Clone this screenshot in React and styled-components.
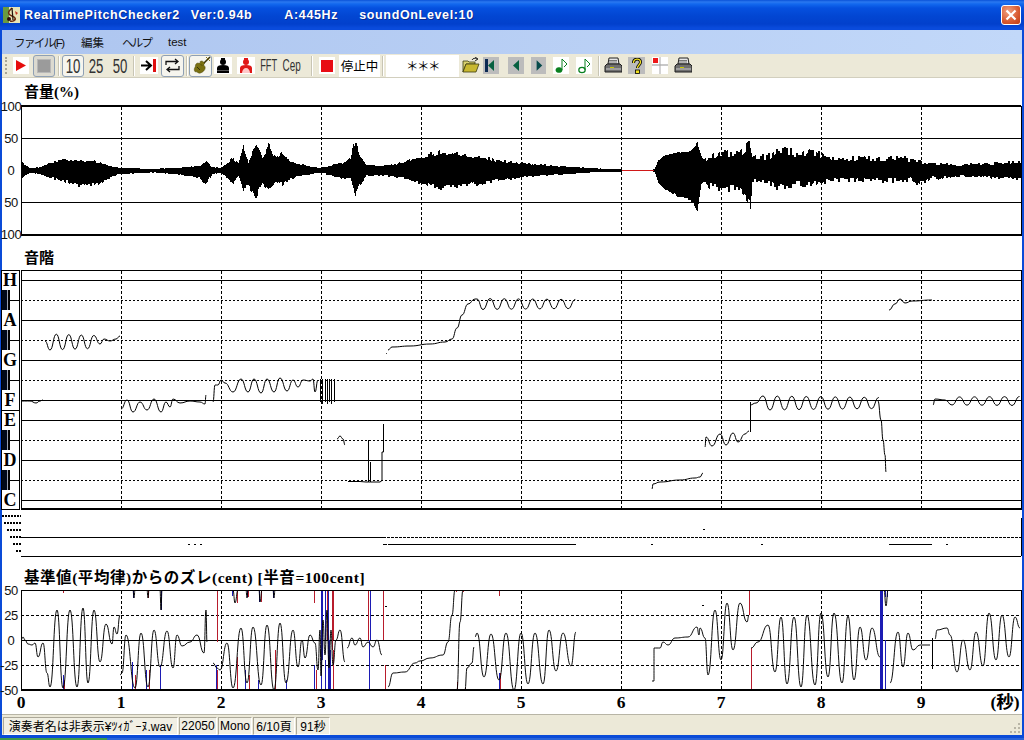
import React from "react";
import styled, { createGlobalStyle } from "styled-components";

const Global = createGlobalStyle`
  html, body { margin: 0; padding: 0; background: #fff; }
  #root { width: 1024px; height: 740px; overflow: hidden; }
`;

const CJK = `"Liberation Sans", "Noto Sans CJK JP", sans-serif`;
const SERIF = `"Liberation Serif", "Noto Sans CJK JP", serif`;

/* ---------- window chrome ---------- */
const Win = styled.div`
  width: 1024px; height: 740px; display: flex; flex-direction: column; overflow: hidden;
  font-family: ${CJK}; color: #000;
`;
const TitleBar = styled.header`
  height: 30px; flex: none; display: flex; align-items: center; padding: 0 3px 0 3px; box-sizing: border-box;
  background: linear-gradient(180deg, #0a52d8 0, #2a78f0 2px, #1268ee 4px, #0550df 8px, #0246d2 16px, #0240cc 24px, #0a4bdc 28px, #0a4bdc 30px);
`;
const TitleText = styled.div`
  display: flex; margin-left: 4px; color: #fff; font-weight: bold; font-size: 12.5px; letter-spacing: 0.65px;
  text-shadow: 1px 1px 0 #0a2a90; white-space: nowrap;
`;
const TitlePart = styled.span` margin-left: ${p => p.$ml || 0}px; `;
const CloseBtn = styled.div`
  margin-left: auto; margin-right: 0; width: 20px; height: 20px; box-sizing: border-box; border: 1px solid #fff; border-radius: 3px;
  background: radial-gradient(circle at 35% 30%, #f0a080, #d85a30 60%, #c03c14);
  display: flex; align-items: center; justify-content: center;
`;
const Client = styled.div`
  flex: 1; min-height: 0; display: flex; flex-direction: column; border-left: 2px solid #0a4bd8; border-right: 2px solid #0a4bd8; background: #fff;
`;
const MenuBar = styled.nav`
  height: 24px; flex: none; display: flex; align-items: center; padding-left: 12px; font-size: 11.5px;
  background: linear-gradient(90deg, #adc5ef, #c2d8f9);
`;
const MenuItem = styled.span`
  color: #111; width: ${p => p.$w}px; flex: none; letter-spacing: ${p => p.$ls || 0}px; white-space: nowrap;
`;
const ToolBar = styled.div`
  height: 24px; flex: none; box-sizing: border-box; display: flex; align-items: center; background: #ece9d8; border-bottom: 1px solid #d2cfbe;
`;
const Grip = styled.div`
  margin-left: ${p => p.$ml}px; width: 2px; height: 17px; border-left: 2px dotted #a8a594; box-sizing: border-box;
`;
const Sep = styled.div`
  margin-left: ${p => p.$ml}px; width: 2px; height: 20px; box-sizing: border-box; border-left: 1px solid #c8c5b4; border-right: 1px solid #fff;
`;
const Tool = styled.div`
  flex: none; margin-left: ${p => p.$ml}px; width: ${p => p.$w}px; height: ${p => p.$framed ? 22 : 17}px; box-sizing: border-box;
  display: flex; align-items: center; justify-content: center;
  background: ${p => p.$bg || "transparent"};
  border: ${p => p.$framed ? "1px solid #8fa0b4" : "none"};
  border-radius: ${p => p.$framed ? 3 : 0}px;
`;
const NarrowDigits = styled.span`
  flex: none; display: inline-block; font-size: ${p => p.$size || 20}px; line-height: 1; transform: scaleX(${p => p.$sx || 0.66}); font-family: "Liberation Sans", sans-serif; color: #333; white-space: nowrap;
`;
const Field = styled.div`
  flex: none; margin-left: ${p => p.$ml}px; width: ${p => p.$w}px; height: 22px; background: #fff; display: flex; align-items: center; justify-content: center;
  font-size: 12.5px; letter-spacing: ${p => p.$ls || 0}px; white-space: nowrap;
`;

/* ---------- body ---------- */
const Body = styled.main` flex: 1; min-height: 0; display: flex; flex-direction: column; background: #fff; `;
const Heading = styled.h2`
  margin: 0; padding: ${p => p.$pt}px 0 0 22px; height: ${p => p.$h}px; box-sizing: border-box; line-height: 22px;
  font-family: ${SERIF}; font-weight: bold; font-size: ${p => p.$size || 15}px; letter-spacing: ${p => p.$ls || 0}px; white-space: nowrap;
`;
const Plot = styled.svg` display: block; flex: none; overflow: visible; `;

const StatusBar = styled.footer`
  height: 21px; flex: none; box-sizing: border-box; display: flex; align-items: center; gap: 1px; padding: 1px 0 0 1px; background: #ece9d8; border-top: 1px solid #b8b5a6; font-size: 12px;
  position: relative;
`;
const Pane = styled.div`
  width: ${p => p.$w}px; height: 18px; box-sizing: border-box; display: flex; align-items: center; justify-content: center; background: #f1efe4; white-space: nowrap;
  border-right: 1px solid #fff; border-bottom: 1px solid #fff; border-left: 1px solid #aca899; border-top: 1px solid #aca899; overflow: hidden;
`;
const Resize = styled.svg` position: absolute; right: 1px; bottom: 1px; `;
const FrameBottom = styled.div` height: 3px; flex: none; background: #0a4bd8; `;
const TaskBar = styled.div` height: 2px; flex: none; display: flex; background: #2a64d8; `;
const StartEdge = styled.div` width: 107px; background: #3f9a4a; `;

/* ---------- data helpers ---------- */
function rng(seed) {
  let s = seed;
  return () => {
    s = (s + 0x6d2b79f5) | 0;
    let t = Math.imul(s ^ (s >>> 15), 1 | s);
    t = (t + Math.imul(t ^ (t >>> 7), 61 | t)) ^ t;
    return ((t ^ (t >>> 14)) >>> 0) / 4294967296;
  };
}
const ENV = [
  [21,10,9],[24,5,5],[30,2,2],[40,3,4],[50,7,7],[60,10,10],[70,10,12],[78,9,16],[85,9,13],[92,10,14],[100,7,12],[110,4,7],[120,2,3],[130,2,3],[150,1,2],[170,2,3],[190,3,6],[200,5,8],[205,9,13],[212,3,4],[220,2,2],[230,10,10],[233,12,12],[238,6,6],[243,22,18],[248,8,16],[256,29,25],[262,13,13],[268,24,19],[275,12,12],[282,18,14],[290,8,8],[300,6,5],[310,3,4],[320,2,2],[340,7,7],[345,8,8],[350,12,8],[355,31,25],[360,14,13],[366,5,5],[380,4,5],[400,7,7],[420,13,12],[440,18,17],[460,16,15],[480,13,13],[500,9,9],[530,6,6],[560,4,4],[590,2,2],[610,1,1],[621,1,1],[622,0,0],[652,0,0],[654,1,1],[658,10,12],[665,15,19],[680,18,27],[690,19,29],[697,27,40],[701,14,14],[703,11,11],[710,13,15],[720,16,17],[740,18,18],[745,22,24],[750,24,32],[752,12,10],[770,14,12],[780,22,18],[800,14,13],[810,18,15],[825,13,11],[840,11,10],[860,12,9],[880,11,10],[900,12,10],[910,10,9],[920,8,14],[930,6,8],[960,5,5],[1020,8,8],
];
function envAt(x) {
  for (let i = 0; i < ENV.length - 1; i++) {
    const a = ENV[i], b = ENV[i + 1];
    if (x >= a[0] && x <= b[0]) {
      const t = (x - a[0]) / (b[0] - a[0]);
      return [a[1] + (b[1] - a[1]) * t, a[2] + (b[2] - a[2]) * t];
    }
  }
  return [1, 1];
}
function wavePath() {
  const r = rng(11);
  let d = "";
  let nu = 1, nl = 1;
  for (let x = 22; x < 1021; x++) {
    const [u, l] = envAt(x);
    if (u === 0 && l === 0) continue;
    const noisy = (x > 703 && x < 1021) ? 0.5 : (x > 654 && x < 703) ? 0.08 : 0.3;
    if (x % 2 === 0) {
      nu = 1 - noisy * 0.5 + noisy * r();
      nl = 1 - noisy * 0.5 + noisy * r();
    }
    d += `M${x}.5 ${(170 - Math.max(u * nu, 1)).toFixed(1)}V${(170.5 + Math.max(l * nl, 1)).toFixed(1)}`;
  }
  return d;
}
function smooth(p) {
  let d = `M${p[0][0]} ${p[0][1]}`;
  for (let i = 1; i < p.length; i++) {
    const [x0, y0] = p[i - 1], [x1, y1] = p[i];
    const m = (x0 + x1) / 2;
    d += `C${m} ${y0} ${m} ${y1} ${x1} ${y1}`;
  }
  return d;
}
function vib(x0, x1, yc, amp, period, ampEnd = amp, dir = 1) {
  const out = [];
  let s = dir;
  for (let x = x0; x <= x1; x += period / 2) {
    const t = (x - x0) / Math.max(1, x1 - x0);
    out.push([+x.toFixed(1), yc + s * (amp + (ampEnd - amp) * t)]);
    s = -s;
  }
  return out;
}
const PITCH = [
  [[22,401],[30,401],[36,403],[40,401],[43,400]],
  [[45,341],...vib(50,94,342,8,12.5,6.5),[100,344],[104,339],[110,341],[116,339],[120,336]],
  [[121,409],[127,400],[133,412],[140,402],[147,410],[154,399],[161,412],[166,402],[170,407],[173,399],[180,403],[190,401],[200,402],[205,404],[206,395]],
  [[213,402],[215,385],[218,385],[221,380],[225,383],[233,392],[241,379],[248,392],[254,379],[261,393],[267,379],[274,392],[280,378],[287,391],[293,380],[298,387],[303,380],[310,381],[313,379],[315,392],[318,380]],
  [[337,439],[340,436],[343,439],[345,445]],
  [[386,354],[387,353]],
  [[388,350],[392,347],[410,346],[430,344],[445,342],[452,339],[457,328],[462,315],[468,304],[475,299],[477,299],...vib(483,576,304,5.5,14.2,4.5)],
  [[652,489],[653,484],[660,482],[680,480],[695,478],[700,477],[703,473]],
  [[705,447],[706,437],[712,446],[720,434],[726,445],[733,433],[738,442],[745,434],[749,431]],
  [[750,405],[756,403],[763,396],...vib(770,880,403,7,14.5,5.5)],
  [[878,401],[881,420],[883,440],[885,455],[886,472]],
  [[889,310],[895,304],[900,299],[905,303],[912,301],[932,300]],
  [[933,405],[935,399],[945,400],...vib(952,1020,401,4,15,4.5)],
];
const COMB = [320,322,325,327,329,331,334];
const DEV = [
  [[21,640],[23,637],[25,640],[28,644],[32,645],[35,643],[38,657],[43,643],[47,673],[50,687],[57,610],[63,688],[70,610],[77,687],[83,608],[88,683],[94,610],[100,662],[106,624],[112,644],[114,627],[117,634],[120,615]],
  [[120,675],[122,673],[126,635],[135,688],[141,633],[148,687],[154,630],[160,667],[167,631],[173,668],[177,635],[182,646],[190,642],[197,635],[204,653],[206,610],[207,642]],
  [[213,663],[217,668],[220,670],[227,643],[233,688],[241,628],[247,683],[253,627],[261,685],[267,625],[274,690],[280,623],[286,683],[293,630],[298,667],[302,640],[305,658],[310,635],[315,643],[318,670],[320,630],[321,676],[323,620],[325,655],[327,610],[329,668],[331,630],[333,665],[336,640],[340,630],[345,662]],
  [[347,648],[352,638],[355,645],[360,638],[363,647],[368,642],[373,647],[377,640],[382,655]],
  [[388,687],[393,673],[405,672],[415,663],[420,661],[430,658],[443,655],[448,642],[452,615],[455,590]],
  [[457,690],[460,622],[463,590]],
  [[465,690],[467,668],[472,663],[474,647]],
  [[475,637],[477,633],[484,677],[491,634],[499,680],[506,633],[514,690],[521,633],[528,684],[535,633],[543,684],[549,630],[556,671],[563,633],[571,666],[576,632]],
  [[652,681],[654,681],[654,648],[660,648],[663,642],[668,645],[675,638],[688,637],[697,627],[699,635],[700,628],[705,638],[708,675],[715,610],[721,660],[727,603],[733,650],[740,603],[747,622],[749,615]],
  [[751,648],[758,642],[768,625],[775,672],[781,617],[787,684],[794,617],[801,687],[807,615],[815,685],[821,613],[828,677],[834,613],[842,683],[848,616],[854,680],[860,627],[866,660],[872,628],[880,657]],
  [[890,683],[898,632],[903,667],[908,633],[913,650],[920,645],[930,645]],
  [[935,639],[937,630],[947,628],[950,635],[957,672],[963,640],[970,670],[976,632],[983,666],[989,613],[996,660],[1002,615],[1009,657],[1015,617],[1020,628]],
  [[133,590],[134,598],[135,590]],[[147,590],[148,598],[149,590]],[[160,590],[161,610],[162,590]],
  [[233,590],[235,603],[238,590]],[[246,590],[247,598],[248,590]],[[259,590],[260,602],[262,590]],[[273,590],[274,598],[275,590]],
  [[884,590],[886,606],[888,590]],
];
const RED = "#b81c2c", BLUE = "#1c1cb4";
const COLOR = [
  [63,590,593,RED],[133,590,598,BLUE],[148,590,598,RED],[217,590,642,RED],[232,590,596,BLUE],[237,590,603,RED],[247,590,597,BLUE],[248,590,597,RED],[259,590,602,BLUE],[261,590,602,RED],[273,590,598,BLUE],[314,590,603,RED],[321,590,660,BLUE,2],[325,590,640,BLUE],[327,590,640,RED],[328,590,640,BLUE],[332,590,650,RED],[333,590,640,RED],[368,590,640,RED],[370,590,640,BLUE],[383,590,640,RED],
  [161,590,610,BLUE,1.5],[499,590,596,RED],[456,590,592,RED],[463,590,592,RED],
  [63,675,690,BLUE],[64,680,690,RED],[132,662,690,BLUE],[135,675,690,RED],[146,670,690,BLUE],[149,670,690,RED],[160,665,690,BLUE],[216,665,690,BLUE],[217,670,690,RED],[237,657,690,RED],[245,670,690,BLUE],[249,675,690,RED],[258,680,690,BLUE],[275,650,690,RED],[286,680,690,BLUE],[314,665,690,BLUE],[316,670,690,RED],[321,660,690,BLUE],[325,660,690,BLUE],[328,640,690,BLUE,2],[330,650,690,BLUE],[333,650,690,RED],[369,640,690,BLUE,1.5],[385,665,690,RED],
  [457,682,690,RED],[465,688,690,RED],[499,673,690,BLUE],[500,673,690,RED],[749,590,615,RED],[751,648,690,RED],
  [880,590,690,BLUE,2],[882,590,690,BLUE,1.5],[885,590,597,BLUE],[885,640,690,BLUE],[887,590,597,BLUE],
];
const TICKS = [121,221,321,421,521,621,721,821,921];
const Dashed = ({ y1, y2 }) => (
  <g stroke="#000" strokeDasharray="3 2" shapeRendering="crispEdges">
    {TICKS.map(x => <line key={x} x1={x + 0.5} x2={x + 0.5} y1={y1} y2={y2} />)}
  </g>
);
const HLine = ({ y, x1 = 21, x2 = 1021, w = 1, dash }) => (
  <line x1={x1} x2={x2} y1={y + (w % 2 ? 0.5 : 0)} y2={y + (w % 2 ? 0.5 : 0)} stroke="#000" strokeWidth={w} strokeDasharray={dash} shapeRendering="crispEdges" />
);
const VLine = ({ x, y1, y2, w = 1, c = "#000" }) => (
  <line x1={x + 0.5} x2={x + 0.5} y1={y1} y2={y2} stroke={c} strokeWidth={w} shapeRendering="crispEdges" />
);
const AxisLabel = styled.text`
  font-family: "Liberation Sans", sans-serif; font-size: 13px; fill: #111; text-anchor: middle; dominant-baseline: central; letter-spacing: -0.4px;
`;
const KeyLabel = styled.text`
  font-family: "Liberation Serif", serif; font-weight: bold; font-size: 18px; fill: #000; text-anchor: middle; dominant-baseline: central;
`;
const TimeLabel = styled.text`
  font-family: ${SERIF}; font-weight: bold; font-size: 17.5px; fill: #000; text-anchor: middle; dominant-baseline: central;
`;

const View = ({ top, height, children }) => (
  <Plot width={1020} height={height} viewBox={`2 ${top} 1020 ${height}`}>{children}</Plot>
);

function VolumeChart() {
  const d = React.useMemo(wavePath, []);
  return (
    <View top={103} height={139}>
      {[138, 202].map(y => <HLine key={y} y={y} />)}
      <Dashed y1={107} y2={235} />
      <path d={d} stroke="#000" strokeWidth="1" fill="none" shapeRendering="crispEdges" />
      <HLine y={170} x1={622} x2={654} />
      <line x1="622" x2="654" y1="170.5" y2="170.5" stroke="#d01818" shapeRendering="crispEdges" />
      <HLine y={106} w={2} />
      <HLine y={235} w={2} />
      <VLine x={21} y1={106} y2={236} />
      <VLine x={1021} y1={106} y2={236} />
      {[["100",11,106],["50",11,138],["0",11,170],["50",11,202],["100",11,234]].map(([t,x,y],i) => <AxisLabel key={i} x={x} y={y}>{t}</AxisLabel>)}
    </View>
  );
}

const SOLID = [280,320,360,400,420,460,500];
const DOTTED = [300,340,380,440,480];
function PitchChart() {
  const labels = [["H",280],["A",320],["G",360],["F",400],["E",420],["D",460],["C",500]];
  return (
    <View top={268} height={243}>
      <rect x="1.5" y="270.5" width="18" height="239" fill="#fff" stroke="#000" shapeRendering="crispEdges" />
      <HLine y={410} x1={2} x2={20} />
      {DOTTED.map(y => (
        <g key={y}>
          <rect x="2" y={y - 10} width="5" height="20" fill="#000818" />
          <rect x="8" y={y - 10} width="2" height="20" fill="#000" />
          <rect x="7" y={y - 10} width="1" height="20" fill="#9aa0b0" />
          <HLine y={y} x1={10} x2={20} />
          <HLine y={y} dash="1.5 2.5" />
        </g>
      ))}
      {SOLID.map(y => <HLine key={y} y={y} />)}
      <Dashed y1={271} y2={509} />
      {labels.map(([t, y]) => <KeyLabel key={t} x={10} y={y}>{t}</KeyLabel>)}
      <HLine y={270} />
      <HLine y={509} w={2} />
      <VLine x={21} y1={270} y2={510} />
      <VLine x={1021} y1={270} y2={510} />
      {PITCH.map((p, i) => <path key={i} d={smooth(p)} fill="none" stroke="#000" strokeWidth="1" />)}
      {COMB.map((x, i) => <VLine key={x} x={x} y1={379} y2={i % 2 ? 404 : 402} />)}
      <VLine x={750} y1={402} y2={432} />
      <path d="M348 481.5H360L366 482H368.500V440V482H370.500V462V482H380L382 480.500V452H383.500V424" fill="none" stroke="#000" />
    </View>
  );
}

function NotesChart() {
  const rows = [[516,2],[523,4],[530,7],[537,10],[544,13],[551,16]];
  const dots = [[188,544],[194,544],[200,544],[703,529],[651,544],[761,544],[946,544]];
  return (
    <View top={511} height={47}>
      {rows.map(([y, x]) => <line key={y} x1={x} x2={21} y1={y} y2={y} stroke="#000" strokeWidth="2" strokeDasharray="2 1" shapeRendering="crispEdges" />)}
      <HLine y={537} x2={383} />
      <HLine y={537} x1={383} dash="3 1" />
      <HLine y={556} />
      <HLine y={544} x1={383} x2={387} />
      <HLine y={544} x1={388} x2={476} />
      <HLine y={544} x1={476} x2={576} />
      <HLine y={544} x1={889} x2={932} />
      {dots.map(([x, y]) => <rect key={x} x={x} y={y} width="2" height="1" fill="#000" />)}
      <VLine x={1021} y1={518} y2={556} />
    </View>
  );
}

function DeviationChart() {
  const xs = [0,1,2,3,4,5,6,7,8,9];
  return (
    <View top={588} height={126}>
      <HLine y={615} dash="3 2" />
      <HLine y={665} dash="3 2" />
      <HLine y={640} w={1} />
      <Dashed y1={591} y2={690} />
      {COLOR.map(([x, a, b, c, w], i) => <VLine key={i} x={x} y1={a} y2={b} c={c} w={w || 1} />)}
      {DEV.map((p, i) => <path key={i} d={smooth(p)} fill="none" stroke="#000" strokeWidth="0.95" />)}
      <VLine x={932} y1={638} y2={669} />
      <rect x="385" y="606" width="2" height="1" />
      <rect x="702" y="605" width="2" height="1" />
      <HLine y={590} />
      <HLine y={690} w={2} />
      <VLine x={21} y1={590} y2={691} />
      <VLine x={1021} y1={590} y2={691} />
      {[["50",11,590],["25",11,615],["0",11,640],["-25",9,665],["-50",9,690]].map(([t,x,y]) => <AxisLabel key={t} x={x} y={y}>{t}</AxisLabel>)}
      {xs.map(n => <TimeLabel key={n} x={21 + n * 100} y={702}>{n}</TimeLabel>)}
      <TimeLabel x={1005} y={702}>(秒)</TimeLabel>
    </View>
  );
}

/* ---------- icons ---------- */
const AppIcon = () => (
  <svg width="17" height="16" viewBox="0 0 17 16" style={{ flex: "none" }}>
    <rect width="17" height="16" fill="#e8e4b8" />
    <rect x="0" y="0" width="6" height="16" fill="#6a9a40" />
    <path d="M9 1C6 4 5 5 6 7c1 2 5 2 6 4s-2 4-5 3" fill="none" stroke="#6a2a10" strokeWidth="1.6" />
    <path d="M9 1l1 12" stroke="#20100a" strokeWidth="1.2" />
    <circle cx="6" cy="12" r="2" fill="#301008" />
    <path d="M12 4l3 2-2 2" fill="#c03020" />
  </svg>
);
const CloseX = () => (
  <svg width="12" height="12" viewBox="0 0 12 12"><path d="M1.500 1.500l9 9M10.500 1.500l-9 9" stroke="#fff" strokeWidth="2.200" /></svg>
);
const PlayIcon = () => <svg width="16" height="17"><path d="M3 3l10 5.500L3 14z" fill="#e60c0c" /></svg>;
const StopIcon = () => <svg width="14" height="14"><rect x="0.500" y="0.500" width="13" height="13" fill="#9b9b9b" stroke="#b8b8b8" /></svg>;
const ArrowBar = () => (
  <svg width="18" height="17"><path d="M1 8.500h9M6 4l5 4.500L6 13" fill="none" stroke="#000" strokeWidth="2" /><rect x="13" y="2" width="3" height="13" fill="#e01010" /></svg>
);
const LoopIcon = () => (
  <svg width="17" height="15" viewBox="0 0 17 15" fill="none" stroke="#111" strokeWidth="1.300">
    <path d="M2 7V3.500h12M11 1l3 2.500L11 6" />
    <path d="M15 8v3.500H3M6 9l-3 2.500L6 14" />
  </svg>
);
const Violin = () => (
  <svg width="20" height="19" viewBox="0 0 20 19">
    <path d="M19 1L11 9" stroke="#3a3208" strokeWidth="1.600" />
    <path d="M15 1l4 4" stroke="#8a7a20" strokeWidth="1" />
    <path d="M10 5c2 0 3 1 3.500 2.500-.8.700-.8 1.500-.3 2.200 1.500 1 1.300 3.500-.5 5.300-2 2-4.500 2.800-6 1.500-1-.8-1.800-.6-2.700-.8-.9-1.200-.8-2.500-.5-3.500.8-1 1-2.200 1-3.200.5-1.500 2-2.300 3-1.800.9.300 1.600-.2 1.800-.9C9 5.600 9.500 5 10 5z" fill="#7a7010" stroke="#4a440a" strokeWidth="0.500" />
    <path d="M6 11l3 3M10 8.500l1 1" stroke="#2e2a06" strokeWidth="0.900" />
  </svg>
);
const Person = ({ color }) => (
  <svg width="14" height="16" viewBox="0 0 14 16">
    <circle cx="7" cy="4" r="3" fill={color} />
    <rect x="5" y="0" width="4" height="2" fill={color} />
    <path d="M1 15V10c0-2 2-3 6-3s6 1 6 3v5z" fill={color} />
    {color !== "#000" && <path d="M3 15c0-3 2-5 4-5s4 2 4 5z" fill="#ffc8c8" />}
    {color === "#000" && <rect x="1" y="12" width="12" height="1" fill="#555" />}
  </svg>
);
const RedSquare = () => <svg width="12" height="12"><rect width="12" height="12" fill="#e80c14" /></svg>;
const Folder = () => (
  <svg width="18" height="17" viewBox="0 0 18 17">
    <path d="M1 4h5l1 1h6v2H4L1 15z" fill="#d8d070" stroke="#3a3a10" strokeWidth="0.800" />
    <path d="M1 15l3-8h13l-3 8z" fill="#c8b830" stroke="#3a3a10" strokeWidth="0.800" />
    <path d="M10 3c1-2 3-2 5-1M13 0l3 2-3 2" fill="none" stroke="#222" />
  </svg>
);
const NavIcon = ({ kind }) => (
  <svg width="16" height="17" viewBox="0 0 16 17">
    {kind === "first" && <rect x="2" y="2" width="3" height="13" fill="#0c2a52" />}
    {kind === "next"
      ? <path d="M6 3l6 5.500L6 14z" fill="#064a4a" />
      : <path d="M11 3L5 8.500l6 5.500z" fill="#066040" />}
  </svg>
);
const Note = ({ hollow }) => (
  <svg width="15" height="17" viewBox="0 0 15 17">
    <ellipse cx="5" cy="13" rx="3.200" ry="2.600" fill={hollow ? "none" : "#0a8020"} stroke="#0a8020" strokeWidth={hollow ? 1.2 : 0.5} />
    <path d="M8 13V2l5 5-3 3" fill="none" stroke="#0a8020" strokeWidth="1" />
  </svg>
);
const Printer = () => (
  <svg width="18" height="17" viewBox="0 0 18 17">
    <path d="M5 1h9l1 6H4z" fill="#e8e8e8" stroke="#222" />
    <path d="M5 3.500h8M5 5h8" stroke="#777" />
    <path d="M1 9l2-2h13l2 2v6H1z" fill="#6f6f6f" stroke="#1c1c1c" />
    <rect x="2" y="11" width="15" height="2" fill="#9e9e9e" />
    <rect x="6" y="10" width="4" height="1" fill="#c8c800" />
  </svg>
);
const Help = () => (
  <svg width="12" height="16" viewBox="0 0 12 16">
    <path d="M2.500 5c0-5 7-5 7-1 0 3-3 3-3 6" fill="none" stroke="#000" strokeWidth="3" />
    <path d="M2.500 5c0-5 7-5 7-1 0 3-3 3-3 6" fill="none" stroke="#f0e020" strokeWidth="1.400" />
    <rect x="4.500" y="12" width="4" height="3.500" fill="#f0e020" stroke="#000" strokeWidth="0.800" />
  </svg>
);
const CrossIcon = () => (
  <svg width="16" height="17">
    <rect x="1" y="1" width="5" height="5" fill="#ee1818" />
    <rect x="0" y="7" width="16" height="2" fill="#c8c8c8" />
    <rect x="7.500" y="0" width="1" height="17" fill="#a8a8a8" />
  </svg>
);

export default function App() {
  return (
    <Win>
      <Global />
      <TitleBar>
        <AppIcon />
        <TitleText>
          <TitlePart>RealTimePitchChecker2</TitlePart>
          <TitlePart $ml={11}>Ver:0.94b</TitlePart>
          <TitlePart $ml={32}>A:445Hz</TitlePart>
          <TitlePart $ml={21}>soundOnLevel:10</TitlePart>
        </TitleText>
        <CloseBtn><CloseX /></CloseBtn>
      </TitleBar>
      <Client>
        <MenuBar>
          <MenuItem $w={67} $ls={-1.6}>ファイル(F)</MenuItem>
          <MenuItem $w={41}>編集</MenuItem>
          <MenuItem $w={46} $ls={-1.8}>ヘルプ</MenuItem>
          <MenuItem $w={30}>test</MenuItem>
        </MenuBar>
        <ToolBar>
          <Grip $ml={3} />
          <Tool $ml={6} $w={16} $bg="#fff"><PlayIcon /></Tool>
          <Tool $ml={4} $w={22} $framed $bg="#dcdad0"><StopIcon /></Tool>
          <Sep $ml={3} />
          <Tool $ml={2} $w={22} $framed $bg="#f6f5ee"><NarrowDigits>10</NarrowDigits></Tool>
          <Tool $ml={2} $w={20}><NarrowDigits>25</NarrowDigits></Tool>
          <Tool $ml={4} $w={20}><NarrowDigits>50</NarrowDigits></Tool>
          <Sep $ml={3} />
          <Tool $ml={5} $w={18} $bg="#fff"><ArrowBar /></Tool>
          <Tool $ml={3} $w={23} $framed $bg="#f6f5ee"><LoopIcon /></Tool>
          <Sep $ml={2} />
          <Tool $ml={1} $w={23} $framed $bg="#f6f5ee"><Violin /></Tool>
          <Tool $ml={2} $w={18} $bg="#fff"><Person color="#000" /></Tool>
          <Tool $ml={5} $w={18} $bg="#fff"><Person color="#e01818" /></Tool>
          <Tool $ml={5} $w={18}><NarrowDigits $size={16} $sx={0.58}>FFT</NarrowDigits></Tool>
          <Tool $ml={5} $w={18}><NarrowDigits $size={16} $sx={0.62}>Cep</NarrowDigits></Tool>
          <Sep $ml={10} />
          <Tool $ml={6} $w={16} $bg="#fff"><RedSquare /></Tool>
          <Field $ml={4} $w={41}>停止中</Field>
          <Sep $ml={2} />
          <Field $ml={2} $w={73} $ls={-1.5}>＊＊＊</Field>
          <Tool $ml={3} $w={18}><Folder /></Tool>
          <Tool $ml={3} $w={16} $bg="#bcbcbc"><NavIcon kind="first" /></Tool>
          <Tool $ml={9} $w={16} $bg="#bcbcbc"><NavIcon kind="prev" /></Tool>
          <Tool $ml={7} $w={15} $bg="#bcbcbc"><NavIcon kind="next" /></Tool>
          <Tool $ml={7} $w={16} $bg="#fff"><Note /></Tool>
          <Tool $ml={7} $w={16} $bg="#fff"><Note hollow /></Tool>
          <Sep $ml={6} />
          <Tool $ml={4} $w={18}><Printer /></Tool>
          <Tool $ml={6} $w={17} $bg="#bcbcbc"><Help /></Tool>
          <Tool $ml={7} $w={16} $bg="#fff"><CrossIcon /></Tool>
          <Tool $ml={6} $w={18}><Printer /></Tool>
        </ToolBar>
        <Body>
          <Heading $pt={3} $h={25}>音量(%)</Heading>
          <VolumeChart />
          <Heading $pt={5} $h={26}>音階</Heading>
          <PitchChart />
          <NotesChart />
          <Heading $pt={9} $h={30} $size={15.5} $ls={0.55}>基準値(平均律)からのズレ(cent) [半音=100cent]</Heading>
          <DeviationChart />
        </Body>
        <StatusBar>
          <Pane $w={175}>演奏者名は非表示¥ﾂｨｶﾞｰﾇ.wav</Pane>
          <Pane $w={38}>22050</Pane>
          <Pane $w={34}>Mono</Pane>
          <Pane $w={42}>6/10頁</Pane>
          <Pane $w={34}>91秒</Pane>
          <Resize width="12" height="12" viewBox="0 0 12 12">
            {[[9,1],[5,5],[9,5],[1,9],[5,9],[9,9]].map(([x, y]) => <rect key={`${x}${y}`} x={x} y={y} width="2" height="2" fill="#b8b5a6" />)}
          </Resize>
        </StatusBar>
      </Client>
      <FrameBottom />
      <TaskBar><StartEdge /></TaskBar>
    </Win>
  );
}
